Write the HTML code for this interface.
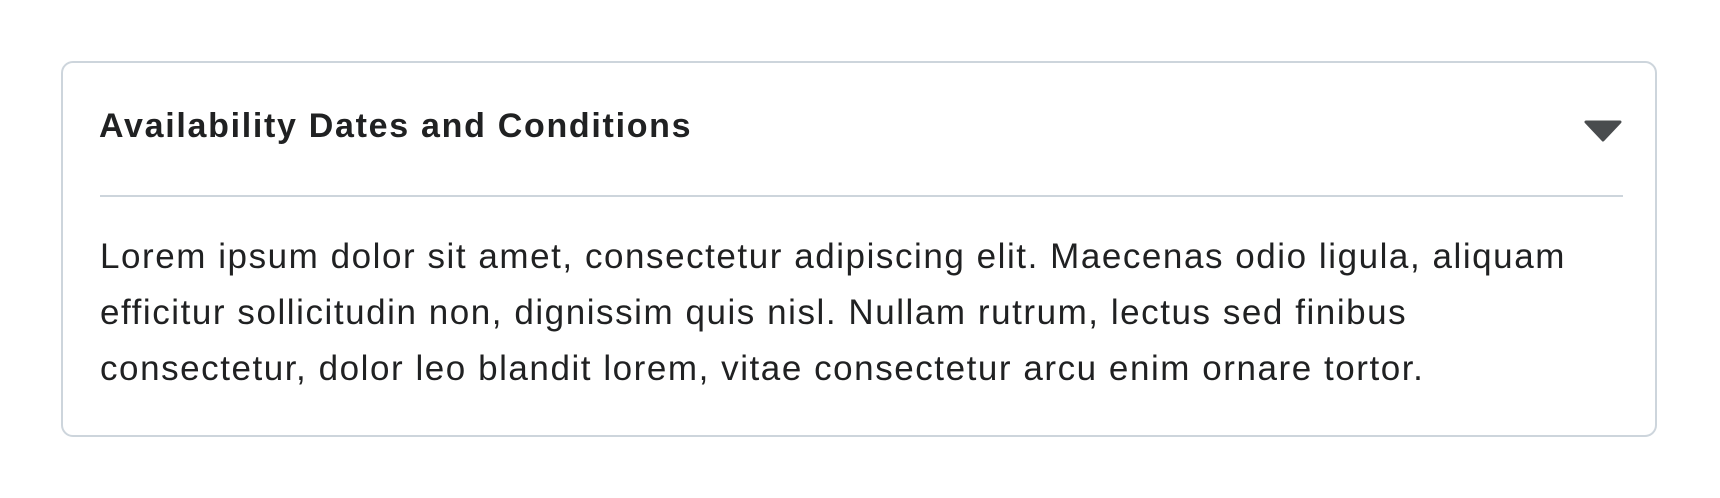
<!DOCTYPE html>
<html><head><meta charset="utf-8"><style>
html,body{margin:0;padding:0;background:#fff;width:1720px;height:498px;overflow:hidden;font-family:"Liberation Sans",sans-serif;color:#202122}
.card{position:absolute;left:61px;top:61px;width:1596px;height:376px;box-sizing:border-box;border:2px solid #cdd5dc;border-radius:12px}
.h{position:absolute;left:36px;top:44px;font-size:34px;font-weight:bold;white-space:nowrap;letter-spacing:1.7px}
.sep{position:absolute;left:37px;top:132px;width:1523px;height:2px;background:#cdd5dc}
.tri{position:absolute;left:1521px;top:57px}
.b{position:absolute;left:37px;top:166px;font-size:35px;line-height:56px;white-space:nowrap;letter-spacing:1.55px}
</style></head><body>
<div class="card">
<div class="h">Availability Dates and Conditions</div>
<svg class="tri" width="38" height="22" viewBox="0 0 38 22"><path d="M2 2 L36 2 L19 20 Z" fill="#494c4e" stroke="#494c4e" stroke-width="3" stroke-linejoin="round"/></svg>
<div class="sep"></div>
<div class="b">Lorem ipsum dolor sit amet, consectetur adipiscing elit. Maecenas odio ligula, aliquam<br>efficitur sollicitudin non, dignissim quis nisl. Nullam rutrum, lectus sed finibus<br>consectetur, dolor leo blandit lorem, vitae consectetur arcu enim ornare tortor.</div>
</div>
</body></html>
